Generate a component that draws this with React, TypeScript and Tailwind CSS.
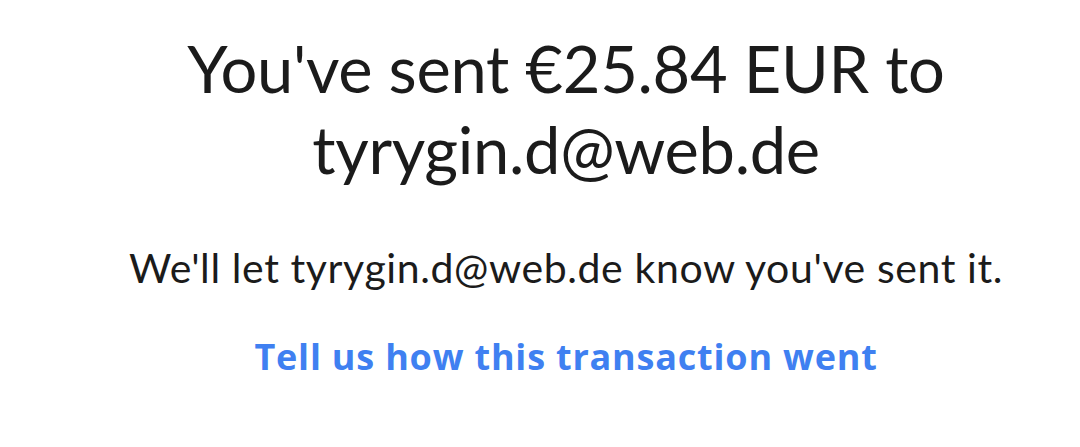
import React from 'react';

const App: React.FC = () => {
  const email = 'tyrygin.d@web.de';
  const amount = '€25.84 EUR';

  return (
    <div className="w-[1080px] h-[447px] bg-white flex justify-center pl-[52px] font-['Lato',sans-serif] overflow-hidden">
      <div className="flex flex-col items-center text-center pt-[28px]">
        <h1 className="text-[65px] leading-[81px] font-normal tracking-[-0.3px] text-[#1b1b1b]">
          You've sent {amount} to
          <br />
          {email}
        </h1>
        <p className="mt-[54px] text-[41px] leading-[48px] tracking-[0.6px] text-[#1b1b1b]">
          We'll let {email} know you've sent it.
        </p>
        <a href="#" className="mt-[43px] font-['Open_Sans',sans-serif] text-[36px] leading-[44px] font-bold tracking-[0.8px] text-[#3f80f1]">
          Tell us how this transaction went
        </a>
      </div>
    </div>
  );
};

export default App;
